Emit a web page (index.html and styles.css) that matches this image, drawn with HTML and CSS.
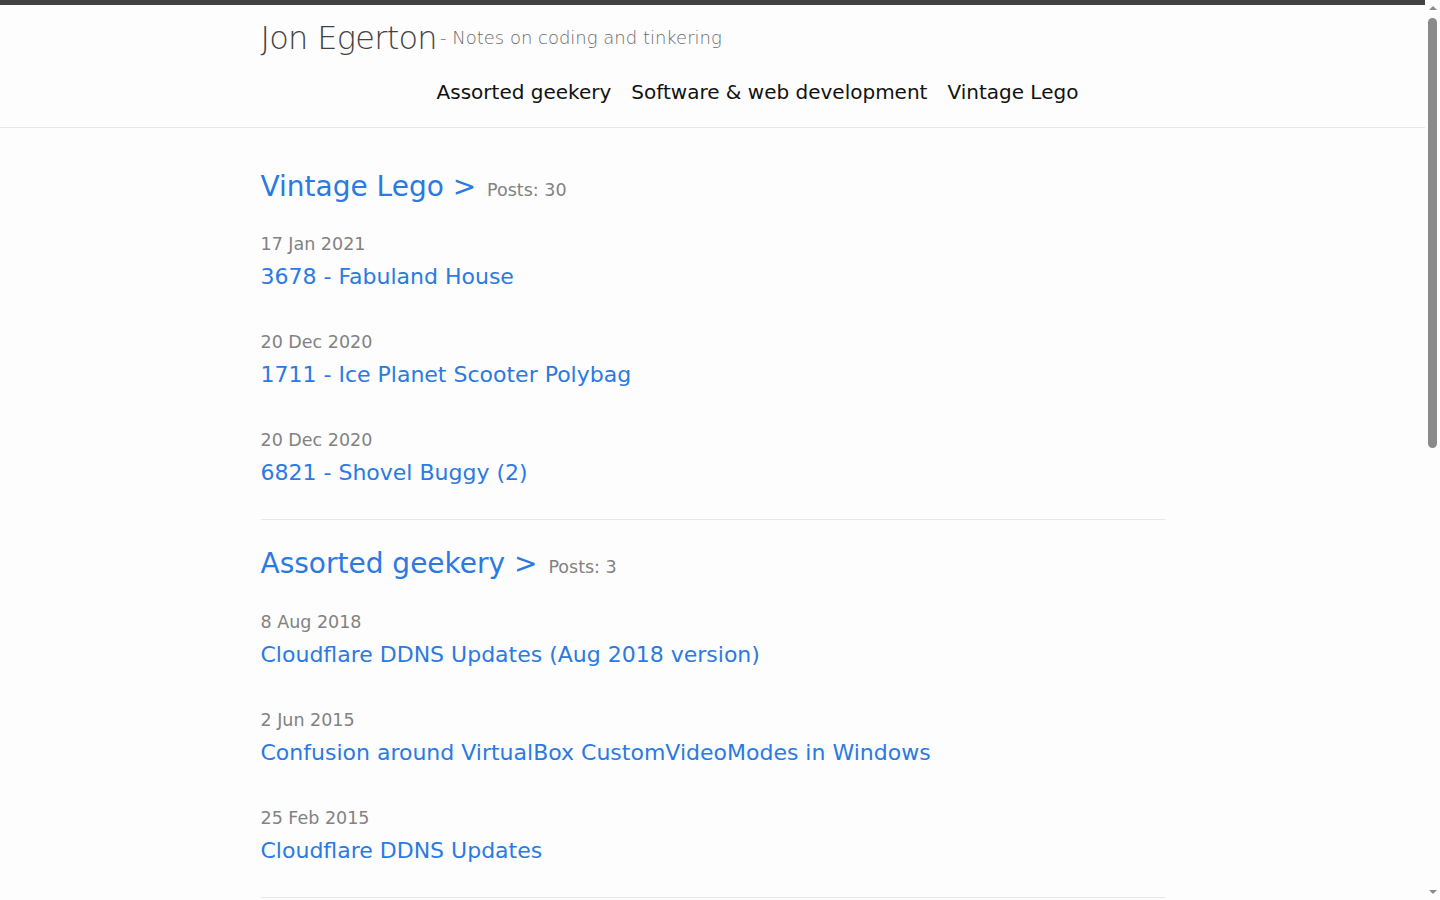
FILE: index.html
```html
<!DOCTYPE html>
<html lang="en">
<head>
  <meta charset="utf-8">
  <meta name="viewport" content="width=device-width, initial-scale=1">
  <title>Jon Egerton - Notes on coding and tinkering</title>
  <link rel="stylesheet" href="styles.css">
</head>
<body>
  <header class="site-header">
    <div class="wrapper">
      <div class="brand">
        <a class="site-title" href="#">Jon Egerton</a>
        <span class="site-tagline">- Notes on coding and tinkering</span>
      </div>
      <nav class="site-nav">
        <a class="page-link" href="#">Assorted geekery</a>
        <a class="page-link" href="#">Software &amp; web development</a>
        <a class="page-link" href="#">Vintage Lego</a>
      </nav>
    </div>
  </header>

  <main class="page-content">
    <div class="wrapper">
      <section class="category">
        <h2 class="category-title"><a href="#">Vintage Lego &gt;</a> <span class="post-count">Posts: 30</span></h2>
        <ul class="post-list">
          <li>
            <span class="post-meta">17 Jan 2021</span>
            <a class="post-link" href="#">3678 - Fabuland House</a>
          </li>
          <li>
            <span class="post-meta">20 Dec 2020</span>
            <a class="post-link" href="#">1711 - Ice Planet Scooter Polybag</a>
          </li>
          <li>
            <span class="post-meta">20 Dec 2020</span>
            <a class="post-link" href="#">6821 - Shovel Buggy (2)</a>
          </li>
        </ul>
      </section>

      <section class="category">
        <h2 class="category-title"><a href="#">Assorted geekery &gt;</a> <span class="post-count">Posts: 3</span></h2>
        <ul class="post-list">
          <li>
            <span class="post-meta">8 Aug 2018</span>
            <a class="post-link" href="#">Cloudflare DDNS Updates (Aug 2018 version)</a>
          </li>
          <li>
            <span class="post-meta">2 Jun 2015</span>
            <a class="post-link" href="#">Confusion around VirtualBox CustomVideoModes in Windows</a>
          </li>
          <li>
            <span class="post-meta">25 Feb 2015</span>
            <a class="post-link" href="#">Cloudflare DDNS Updates</a>
          </li>
        </ul>
      </section>

      <section class="category">
        <h2 class="category-title"><a href="#">Software &amp; web development &gt;</a> <span class="post-count">Posts: 12</span></h2>
        <ul class="post-list">
          <li>
            <span class="post-meta">3 Mar 2019</span>
            <a class="post-link" href="#">Moving the blog to Jekyll</a>
          </li>
          <li>
            <span class="post-meta">14 Nov 2016</span>
            <a class="post-link" href="#">SQL Server string splitting revisited</a>
          </li>
          <li>
            <span class="post-meta">9 Apr 2015</span>
            <a class="post-link" href="#">Razor helpers for Bootstrap forms</a>
          </li>
        </ul>
      </section>
    </div>
  </main>

  <footer class="site-footer">
    <div class="wrapper">
      <h2 class="footer-heading">Jon Egerton</h2>
      <div class="footer-cols">
        <ul class="contact-list">
          <li>Jon Egerton</li>
          <li>Notes on coding and tinkering</li>
        </ul>
        <p class="footer-about">Posts about software, web development, vintage Lego and assorted geekery.</p>
      </div>
    </div>
  </footer>

  <div class="scrollbar" aria-hidden="true">
    <span class="scroll-arrow up"></span>
    <span class="scroll-thumb"></span>
    <span class="scroll-arrow down"></span>
  </div>
</body>
</html>
```

FILE: styles.css
```css
html { background: #fdfdfd; }
body { margin: 0 15px 0 0; font-family: "DejaVu Sans", sans-serif; color: #111; background: #fdfdfd; }
a { text-decoration: none; }
.wrapper { max-width: 904px; margin: 0 auto; }

/* header */
.site-header { border-top: 5px solid #424242; border-bottom: 1px solid #e8e8e8; padding: 13px 0 20px; }
.brand { display: flex; align-items: center; line-height: 40px; }
.site-title { font-size: 32px; font-weight: 200; letter-spacing: -0.7px; color: #424242; }
.site-tagline { margin-left: 3px; font-size: 18px; font-weight: 200; color: #6b6b6b; }
.site-nav { display: flex; justify-content: center; gap: 20px; padding-left: 90px; margin-top: 19px; line-height: 30px; }
.page-link { font-size: 20px; color: #111; }

/* categories */
.category { padding: 42px 0 32px; border-bottom: 1px solid #e8e8e8; }
.category + .category { padding-top: 27px; }
.category + .category .post-list { margin-top: 26px; }
.category-title { margin: 0; font-size: 28px; font-weight: normal; line-height: 34px; }
.category-title a { color: #2a7ae2; }
.post-count { font-size: 17.5px; color: #828282; margin-left: 2px; }
.post-list { list-style: none; margin: 25px 0 0; padding: 0; display: flex; flex-direction: column; gap: 39px; }
.post-list li { display: flex; flex-direction: column; gap: 6px; }
.post-meta { font-size: 17.5px; line-height: 25px; color: #828282; }
.post-link { font-size: 22px; line-height: 28px; color: #2a7ae2; align-self: flex-start; }

/* footer */
.site-footer { padding: 30px 0 240px; }
.footer-heading { margin: 0 0 15px; font-size: 20px; font-weight: normal; color: #111; }
.footer-cols { display: flex; gap: 40px; font-size: 16px; color: #828282; }
.contact-list { list-style: none; margin: 0; padding: 0; }
.footer-about { margin: 0; max-width: 400px; }

/* scrollbar */
.scrollbar { position: fixed; top: 0; right: 0; width: 15px; height: 100vh; background: #fdfdfd;
  display: flex; flex-direction: column; align-items: center; }
.scroll-arrow { width: 0; height: 0; border-left: 4px solid transparent; border-right: 4px solid transparent; }
.scroll-arrow.up { margin-top: 6px; border-bottom: 4px solid #8a8a8a; }
.scroll-arrow.down { margin-top: auto; margin-bottom: 6px; border-top: 4px solid #8a8a8a; }
.scroll-thumb { margin-top: 8px; width: 9px; height: 430px; background: #8a8a8a; border-radius: 5px; }
```
